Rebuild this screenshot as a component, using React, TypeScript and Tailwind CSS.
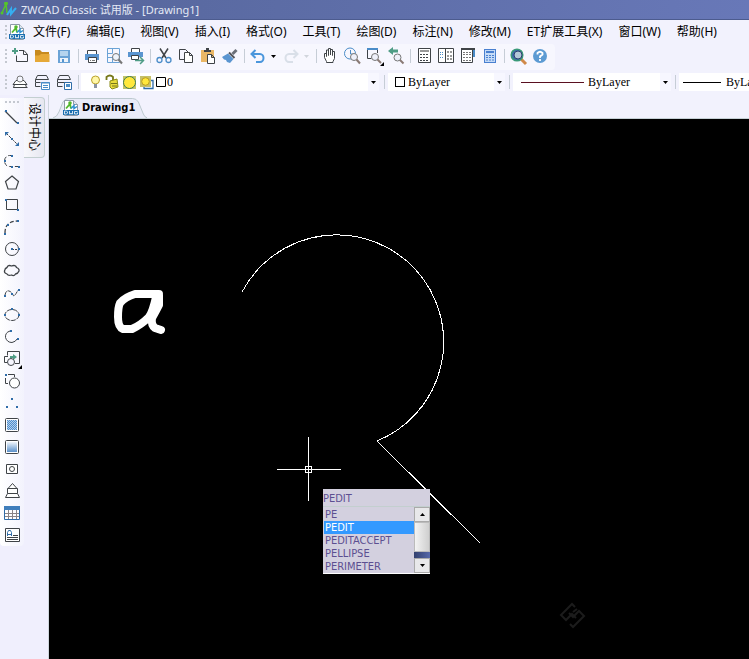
import type { ReactNode } from "react";

const INK = "#3f4347";
const BLUE = "#4a8cc8";

/* Every glyph is drawn on the 22px cell of its button */
const icons: Record<string, ReactNode> = {
  // Standard toolbar
  new: (
    <>
      <path d="M3 6h6M6 3v6" stroke="#4f9d86" strokeWidth="2" />
      <path d="M10 5.500h5l3.500 4v7h-11v-6M14.500 5.500v4h4" stroke={INK} fill="none" />
    </>
  ),
  open: (
    <>
      <path d="M4 5h5l2 2h7v10H4z" fill="#c78a1e" />
      <path d="M4 17V10.500h4l2-1.500h8.500V17z" fill="#e6a937" />
    </>
  ),
  save: (
    <>
      <path d="M5 5h12v13H5z" fill="#6ba3d6" />
      <path d="M7 6h8v5H7z" fill="#b5d4ee" />
      <path d="M7 13h8v4H7z" fill="#eef4fb" />
      <path d="M9 14h2v3H9z" fill="#5795cf" />
    </>
  ),
  print: (
    <>
      <path d="M6.500 9V5.500h9V9" stroke={INK} fill="#fff" />
      <path d="M4 9h14v6H4z" fill="#5a95d0" />
      <path d="M7.500 12.500h8v5h-8z" stroke={INK} fill="#fff" />
      <path d="M9 15.500h1M11 15.500h3" stroke="#777" />
    </>
  ),
  preview: (
    <>
      <path d="M4.500 3.500h12v14h-12zM4.500 8.500h5v-5M9.500 12v5.500M4.500 12.500h5" stroke="#6ba3d6" fill="none" />
      <circle cx="13" cy="12" r="3.500" fill="#eef4fb" stroke="#777" />
      <path d="M15.500 14.500l3.500 4" stroke="#777" strokeWidth="2" />
    </>
  ),
  publish: (
    <>
      <path d="M6.500 7V3.500h8V7" stroke={INK} fill="#fff" />
      <path d="M3 7h15v5H3z" fill="#5a95d0" />
      <path d="M6.500 10.500h7v4h-7z" stroke={INK} fill="#fff" />
      <path d="M10 15.500h8M15 12l3.500 3.500L15 19" stroke="#4f9d86" strokeWidth="1.500" fill="none" />
    </>
  ),
  cut: (
    <>
      <path d="M7 3.500l6 9.500M15 3.500L9 13" stroke={INK} strokeWidth="1.500" />
      <circle cx="6.500" cy="15" r="2.500" stroke={BLUE} fill="none" strokeWidth="1.300" />
      <circle cx="15.500" cy="15" r="2.500" stroke={BLUE} fill="none" strokeWidth="1.300" />
    </>
  ),
  copy: (
    <>
      <path d="M4.500 4.500h6l3 3v7h-9z" stroke={INK} fill="#f6f6ff" />
      <path d="M9.500 7.500h5l3 3v7h-8zM14.500 7.500v3h3" stroke={INK} fill="#fff" />
    </>
  ),
  paste: (
    <>
      <path d="M4 5h13v12H4z" fill="#eab765" />
      <path d="M7 6h7M9 4h3" stroke={INK} strokeWidth="2" />
      <path d="M10.500 9.500h4l3 3v6h-7zM14.500 9.500v3h3" stroke={INK} fill="#fff" />
    </>
  ),
  brush: (
    <>
      <path d="M17.500 5l-4 4" stroke="#6a6f78" strokeWidth="3" />
      <path d="M10 7.500l5.500 5.500" stroke="#54565c" strokeWidth="2" />
      <path d="M9 8.500l5.500 5.500-3.500 4-3-1-1-2-2-.5-2-2.500z" fill="#5a95d0" />
    </>
  ),
  undo: (
    <path d="M8.500 5L4.500 9l4 4M5 9h8a3.500 4 0 0 1 0 8H9" stroke="#4a96dc" strokeWidth="2" fill="none" />
  ),
  redo: (
    <path d="M13.500 5l4 4-4 4M17 9H9a3.500 4 0 0 0 0 8h4" stroke="#d9dfe8" strokeWidth="2" fill="none" />
  ),
  pan: (
    <path
      d="M7.500 17.500v-1L5.500 12.500V8.500h2v3V5h2v5.500V3.500h2V10V4.500h2v6V6.500h2v7l-1.500 3v1z"
      stroke={INK}
      fill="#fff"
    />
  ),
  zoomRealtime: (
    <>
      <circle cx="9" cy="8.500" r="5.500" stroke={BLUE} fill="none" />
      <path d="M9.500 5v4h3" stroke={BLUE} fill="none" />
      <circle cx="13" cy="12" r="3.500" fill="#eef0fa" stroke="#777" />
      <path d="M15.500 14.500l3.500 4" stroke="#8a7a74" strokeWidth="2" />
    </>
  ),
  zoomWindow: (
    <>
      <path d="M4 4h11" stroke={BLUE} strokeWidth="2" />
      <path d="M4.500 5v8.500h4M14.500 5v3" stroke={INK} fill="none" />
      <circle cx="12" cy="12" r="3.500" fill="#eef0fa" stroke="#777" />
      <path d="M14.500 14.500l3.500 3.500" stroke="#8a7a74" strokeWidth="2" />
      <path d="M21 17v4h-4z" fill="#000" />
    </>
  ),
  zoomPrevious: (
    <>
      <path d="M5 6h8" stroke="#4f9d86" strokeWidth="3" />
      <path d="M8 2v8L3 6z" fill="#4f9d86" />
      <circle cx="12.500" cy="12.500" r="3.500" fill="#eef0fa" stroke="#777" />
      <path d="M15 15l3.500 3.500" stroke="#8a7a74" strokeWidth="2" />
    </>
  ),
  properties: (
    <>
      <path d="M5.500 3.500h12v14h-12z" stroke={INK} fill="#fff" />
      <path d="M7 6h9" stroke="#999" strokeWidth="2" />
      <path d="M7 9.500h9M7 12.500h9M7 15.500h9" stroke={INK} strokeDasharray="2 1" />
    </>
  ),
  designCenter: (
    <>
      <path d="M3.500 3.500h15v14h-15zM10.500 3.500v14" stroke={INK} fill="#fff" />
      <path d="M12 7h5M12 11h5M12 14h5" stroke="#999" strokeDasharray="2 1" strokeWidth="2" />
      <path d="M5 7.500h4M5 9.500h4M5 12.500h4" stroke={BLUE} strokeDasharray="1 1" />
    </>
  ),
  toolPalette: (
    <>
      <path d="M4.500 3.500h11v14h-11z" stroke={INK} fill="#fff" />
      <path d="M4 4h14" stroke={INK} strokeWidth="2" />
      <path d="M17 5v7" stroke={BLUE} strokeWidth="2" />
      <path d="M6 7.500h8M6 9.500h8M6 12.500h8M6 15.500h8" stroke="#777" strokeDasharray="2 1" />
    </>
  ),
  calculator: (
    <>
      <rect x="5.500" y="4.500" width="11" height="13" fill="#c5dbf7" stroke="#4a80d0" />
      <path d="M7 7h8" stroke="#4a80d0" strokeWidth="2" />
      <path d="M7 10.500h8M7 12.500h8M7 15h8" stroke="#4a80d0" strokeDasharray="2 1" />
    </>
  ),
  find: (
    <>
      <path d="M13 13l6 6" stroke="#d08a4a" strokeWidth="3" />
      <circle cx="10" cy="10" r="5.800" fill="#3b6ba8" stroke="#3a9a78" strokeWidth="1.500" />
      <circle cx="11" cy="10" r="4" fill="#b3c7d8" stroke="#2d3e70" />
    </>
  ),
  help: (
    <>
      <circle cx="11" cy="11" r="7" fill="#5c9bd3" />
      <path d="M8.500 9.500V8q2.500-2.500 5 0v1.500L11 11.500V13M11 14v2" stroke="#fff" strokeWidth="1.800" fill="none" />
    </>
  ),

  // Layer toolbar
  layers: (
    <>
      <path d="M7 9.500h8l3 4H4zM5.500 13.500l-1 3h13l-1-3M4.500 16.500h14" stroke={INK} fill="#fff" />
      <circle cx="11" cy="8" r="3" stroke="#777" fill="#f4f6ff" />
    </>
  ),
  layerStates: (
    <>
      <path d="M6.500 4.500h9l2 4h-13zM4.500 8.500v3h5M4.500 12v3.500h5" stroke={INK} fill="none" />
      <path d="M10.500 11.500h8v7h-8z" stroke={BLUE} fill="#fff" />
      <path d="M10 12h9M12 14.500h5M12 16.500h5" stroke={BLUE} />
    </>
  ),
  layerPrevious: (
    <>
      <path d="M6.500 4.500h9l2 4h-13zM4.500 8.500v3h13M4.500 12v3.500h5" stroke={INK} fill="none" />
      <path d="M11.500 11.500h7v7h-7z" stroke="#2f6ca8" fill="#fff" />
      <path d="M13 13h4v3h-4z" fill={BLUE} />
    </>
  ),

  // Draw toolbar
  line: (
    <>
      <path d="M5 5l12 12" stroke={INK} strokeWidth="1.200" />
      <path d="M5 4h2v2H5zM17 16h2v2h-2z" fill="#2f6ca8" />
    </>
  ),
  ray: (
    <>
      <path d="M6 5l12 12" stroke={INK} strokeDasharray="3 1" />
      <path d="M5 8V4h4zM19 14v4h-4zM11 10h2v2h-2z" fill="#2f6ca8" />
    </>
  ),
  polyline: (
    <>
      <path d="M12 5.500H9.500a5 5.500 0 0 0 0 11h9" stroke={INK} fill="none" strokeDasharray="4 2" />
      <path d="M11 5h2v2h-2zM4 10h2v2H4zM11 16h2v2h-2zM18 16h2v2h-2z" fill="#2f6ca8" />
    </>
  ),
  polygon: <path d="M12 4l6.500 5.500L16 17H8L5.500 9.500z" stroke={INK} strokeWidth="1.200" fill="none" />,
  rectangle: (
    <>
      <path d="M6.500 5.500h11v10h-11z" stroke={INK} fill="none" />
      <path d="M5 5h2v2H5zM17 15h2v2h-2z" fill="#2f6ca8" />
    </>
  ),
  arc: (
    <>
      <path d="M5 17q0-12 13-12" stroke={INK} strokeWidth="1.300" strokeDasharray="4 2" fill="none" />
      <path d="M4 17h2v2H4zM7 8h2v2H7zM17 4h2v2h-2z" fill="#2f6ca8" />
    </>
  ),
  circle: (
    <>
      <circle cx="12" cy="11" r="6.500" stroke={INK} fill="none" />
      <path d="M12 11.500h6" stroke={INK} strokeDasharray="2 1" />
      <path d="M11 10h2v2h-2zM18 10h2v2h-2z" fill="#2f6ca8" />
    </>
  ),
  cloud: (
    <path
      d="M7 7.500q1-3 4.500-1.500 4-1.500 5 1.500 3 1 2.500 3.500-1 2.500-3.500 3-1.500 2.500-4 1-3.500 1-4.500-1-3-1-2.500-3 .5-3 2.500-3.500z"
      stroke={INK}
      strokeWidth="1.300"
      fill="none"
    />
  ),
  spline: (
    <>
      <path d="M5 13q1-5 4-4t4 4 5-5" stroke={INK} fill="none" strokeDasharray="4 1" />
      <path d="M4 13h2v2H4zM11 11h2v2h-2zM18 7h2v2h-2z" fill="#2f6ca8" />
    </>
  ),
  ellipse: (
    <>
      <ellipse cx="12" cy="11" rx="7" ry="5.500" stroke={INK} fill="none" strokeDasharray="5 1" />
      <path d="M11 4h2v2h-2zM4 10h2v2H4zM18 10h2v2h-2z" fill="#2f6ca8" />
    </>
  ),
  ellipseArc: (
    <>
      <path d="M10 5q-5 1.500-4.500 6.500 1.500 5 6.500 5 3.500-.5 5.500-4" stroke={INK} fill="none" />
      <path d="M10 4h2v2h-2zM17 12h2v2h-2z" fill="#2f6ca8" />
    </>
  ),
  insertBlock: (
    <>
      <path d="M7.500 7.500v-4h12v12H15M8 8.500H4.500v6H7" stroke={INK} fill="none" />
      <path d="M10 8h3V6l4 3-4 3v-2h-3z" fill="#4f9d86" />
      <circle cx="11" cy="14" r="3.500" stroke={INK} fill="#f6f6ff" />
      <path d="M22 17v4h-4z" fill="#000" />
    </>
  ),
  makeBlock: (
    <>
      <path d="M8 4.500h6.500V7M5.500 8v5.500H8" stroke={INK} fill="none" />
      <path d="M5 4h2v2H5z" fill="#2f6ca8" />
      <circle cx="14.500" cy="13" r="5" stroke={INK} fill="#fff" />
    </>
  ),
  point: <path d="M11 6h2v2h-2zM6 14h2v2H6zM16 14h2v2h-2z" fill="#2f6ca8" />,
  hatch: (
    <>
      <rect x="5.500" y="4.500" width="13" height="13" rx="1" stroke={INK} fill="#fff" />
      <path d="M7 6h10v10H7z" fill="#b4cfec" />
      <path
        d="M7 6.500h10M8 7.500h9M7 8.500h10M8 9.500h9M7 10.500h10M8 11.500h9M7 12.500h10M8 13.500h9M7 14.500h10M8 15.500h9"
        stroke="#4f8fce"
        strokeDasharray="1 1"
      />
    </>
  ),
  gradient: (
    <>
      <defs>
        <linearGradient id="fade" x1="0" y1="0" x2="0" y2="1">
          <stop stopColor="#eef4fb" />
          <stop offset="1" stopColor="#5a90ca" />
        </linearGradient>
      </defs>
      <rect x="5.500" y="4.500" width="13" height="13" rx="1" stroke={INK} fill="#fff" />
      <path d="M7 6h10v10H7z" fill="url(#fade)" />
    </>
  ),
  region: (
    <>
      <path d="M6.500 6.500h11v9h-11z" stroke={INK} fill="#fff" />
      <circle cx="12" cy="11" r="2.500" stroke={INK} fill="none" />
    </>
  ),
  wipeout: (
    <path d="M12.500 3.500l4.500 5H8zM7.500 8.500h10v5h-10zM7.500 13.500l-2 4h14l-2-4" stroke={INK} fill="#fff" />
  ),
  table: (
    <>
      <path d="M4.500 4.500h15v13h-15z" stroke="#2f6ca8" fill="#fff" />
      <path d="M5 11.500h14M5 14.500h14M8.500 8v9M12.500 8v9M16.500 8v9" stroke="#8b8587" />
      <path d="M4 4h16v4H4z" fill="#3f7dbb" />
    </>
  ),
  text: (
    <>
      <path d="M5.500 4.500h14v13h-14z" stroke={INK} fill="#fff" />
      <path d="M7.500 12V8.500l1-2h2l1 2V12M8 10.500h3" stroke="#2f6ca8" fill="none" />
      <path d="M13 11.500h5M7 13.500h11M7 15.500h11" stroke={INK} />
    </>
  ),
};

function Icon({ name }: { name: string }) {
  return (
    <svg viewBox="0 0 22 22" className="size-[22px]" aria-hidden="true">
      {icons[name]}
    </svg>
  );
}

function ToolButton({ name }: { name: string }) {
  return (
    <button type="button" aria-label={name} className="block size-[22px] shrink-0 hover:bg-blue-100">
      <Icon name={name} />
    </button>
  );
}

function Separator() {
  return (
    <div className="flex h-[22px] w-1.5 shrink-0 items-center justify-center">
      <div className="h-3.5 w-px bg-[#c6cdd6]" />
    </div>
  );
}

function Grip() {
  return (
    <div className="flex h-[22px] w-[9px] shrink-0 flex-col items-end justify-center gap-0.5 pr-0.5">
      {[0, 1, 2, 3].map((dot) => (
        <div key={dot} className="size-0.5 bg-[#c4c8d0]" />
      ))}
    </div>
  );
}

function Caret({ faded }: { faded?: boolean }) {
  return (
    <svg viewBox="0 0 5 3" className={faded ? "h-[3px] w-[5px] fill-gray-300" : "h-[3px] w-[5px] fill-black"}>
      <path d="M0 0h5L2.500 3z" />
    </svg>
  );
}

/* DWG document badge used by the menu bar and the file tab */
function DwgIcon() {
  return (
    <svg viewBox="0 0 16 16" className="size-4 shrink-0" aria-hidden="true">
      <path d="M1.500.5h9l4 4v11h-13z" fill="#fff" stroke="#8d9aa8" />
      <path d="M10.500.5v4h4" fill="#dfe6ee" stroke="#8d9aa8" />
      <path d="M3 8.500L7 4l1 4.500" stroke="#52b82c" strokeWidth="1.800" fill="none" />
      <circle cx="7" cy="3" r="1.800" fill="#52b82c" />
      <path d="M8 8.500l3-3v3l3-2" stroke="#2b8fd0" strokeWidth="1.500" fill="none" />
      <path d="M0 10h16v5H0z" fill="#1c6fb0" />
      <path d="M1.500 11v3h2l1-1v-1l-1-1zM6.500 11v3h1l.5-1 .5 1h1v-3M14.500 11.500h-3v2.500h3v-1.500" stroke="#fff" fill="none" strokeWidth=".8" />
    </svg>
  );
}

interface ComboProps {
  label: string;
  value: string;
  width: string;
  padding: string;
  children: ReactNode;
}

function Combo({ label, value, width, padding, children }: ComboProps) {
  return (
    <div className={`relative mt-0.5 h-[18px] shrink-0 bg-white ${width}`}>
      <select
        aria-label={label}
        className={`block h-full w-full appearance-none bg-transparent font-["Liberation_Serif",serif] text-xs leading-[18px] text-black outline-none ${padding}`}
      >
        <option>{value}</option>
      </select>
      <div className="pointer-events-none absolute inset-y-0 left-0 flex items-center">{children}</div>
      <div className="pointer-events-none absolute inset-y-0 right-0 flex w-[11px] items-center justify-center bg-[#f7f7ff]">
        <Caret />
      </div>
    </div>
  );
}

const menus = [
  "文件(F)",
  "编辑(E)",
  "视图(V)",
  "插入(I)",
  "格式(O)",
  "工具(T)",
  "绘图(D)",
  "标注(N)",
  "修改(M)",
  "ET扩展工具(X)",
  "窗口(W)",
  "帮助(H)",
];

const drawTools = [
  "line", "ray", "polyline", "polygon", "rectangle", "arc", "circle", "cloud", "spline", "ellipse",
  "ellipseArc", "insertBlock", "makeBlock", "point", "hatch", "gradient", "region", "wipeout", "table", "text",
];

const commands = ["PE", "PEDIT", "PEDITACCEPT", "PELLIPSE", "PERIMETER"];

function StandardToolbar() {
  return (
    <div className="flex h-[26px] w-fit items-start rounded-r bg-[#f7f7fe] pt-px pr-1">
      <Grip />
      <ToolButton name="new" />
      <ToolButton name="open" />
      <ToolButton name="save" />
      <Separator />
      <ToolButton name="print" />
      <ToolButton name="preview" />
      <ToolButton name="publish" />
      <Separator />
      <ToolButton name="cut" />
      <ToolButton name="copy" />
      <ToolButton name="paste" />
      <ToolButton name="brush" />
      <Separator />
      <ToolButton name="undo" />
      <button type="button" aria-label="undo list" className="flex h-[22px] w-[11px] items-center pl-0.5">
        <Caret />
      </button>
      <ToolButton name="redo" />
      <button type="button" aria-label="redo list" className="flex h-[22px] w-[11px] items-center pl-0.5">
        <Caret faded />
      </button>
      <Separator />
      <ToolButton name="pan" />
      <ToolButton name="zoomRealtime" />
      <ToolButton name="zoomWindow" />
      <ToolButton name="zoomPrevious" />
      <Separator />
      <ToolButton name="properties" />
      <ToolButton name="designCenter" />
      <ToolButton name="toolPalette" />
      <ToolButton name="calculator" />
      <Separator />
      <ToolButton name="find" />
      <ToolButton name="help" />
    </div>
  );
}

function LayerToolbar() {
  return (
    <div className="flex h-[25px] items-start overflow-hidden pt-px">
      <Grip />
      <ToolButton name="layers" />
      <ToolButton name="layerStates" />
      <ToolButton name="layerPrevious" />
      <Separator />
      <Combo label="Layer" value="0" width="w-[298px]" padding="pl-[86px]">
        <svg viewBox="0 0 86 18" className="h-[18px] w-[86px]" aria-hidden="true">
          {/* bulb */}
          <circle cx="14.500" cy="7" r="4" fill="#fff7a8" stroke="#b9a12c" />
          <path d="M13 11h3v4h-3z" fill="#8b94a4" />
          {/* lock */}
          <path d="M25.500 7V4q3.500-3 6.500 0v4" stroke="#77781a" strokeWidth="1.800" fill="none" />
          <path d="M29 8l7-2 1 8-6 2-2-2z" fill="#e9dc3a" stroke="#8b8b16" />
          <path d="M30 10.500h6M31 13h5" stroke="#77781a" />
          {/* sun */}
          <path d="M42 3h13v13H42z" fill="#c2c46a" />
          <circle cx="48.500" cy="9.500" r="6" fill="#ffe83c" stroke="#3f7a54" />
          {/* viewport freeze */}
          <path d="M65 7.500h7v8h-9v-3" stroke="#2f6ca8" strokeWidth="1.300" fill="#fff" />
          <path d="M59 3h11v11H59z" fill="#c5c06a" />
          <circle cx="64.500" cy="8.500" r="3.800" fill="#ffe83c" stroke="#bd9d1c" />
          <path d="M75.500 4.500h9v9h-9z" stroke="#000" fill="#fff" />
        </svg>
      </Combo>
      <div className="mr-px ml-0.5 flex"><Separator /></div>
      <Combo label="Color" value="ByLayer" width="w-[117px]" padding="pl-5">
        <div className="ml-[7px] size-2.5 border border-black" />
      </Combo>
      <div className="mx-px flex"><Separator /></div>
      <Combo label="Linetype" value="ByLayer" width="w-[158px]" padding="pl-[75px]">
        <div className="ml-2 h-px w-[63px] bg-[#5a1020]" />
      </Combo>
      <div className="mx-px flex"><Separator /></div>
      <Combo label="Lineweight" value="ByLayer" width="w-[158px]" padding="pl-[47px]">
        <div className="ml-1 h-px w-[38px] bg-black" />
      </Combo>
    </div>
  );
}

function CommandPopup() {
  return (
    <div className='absolute top-[370px] left-[274px] w-[107px] bg-[#d3d0df] font-["DejaVu_Sans_Condensed","DejaVu_Sans",sans-serif] text-[11px] text-[#5c4f91]'>
      <input
        aria-label="Command"
        defaultValue="PEDIT"
        className="block h-[17px] w-full bg-transparent pt-0.5 outline-none"
      />
      <div className="flex border-y border-t-[#c3cfcf] border-b-white">
        <ul role="listbox" aria-label="Commands" className="min-w-0 flex-1 pt-px pl-px">
          {commands.map((command) => (
            <li
              key={command}
              role="option"
              aria-selected={command === "PEDIT"}
              className="h-[13px] pl-px leading-[13px] aria-selected:bg-[#3399ff] aria-selected:text-white"
            >
              {command}
            </li>
          ))}
        </ul>
        <div className="flex w-4 flex-col bg-linear-to-r from-[#33416f] to-[#5668aa]">
          <button type="button" aria-label="Scroll up" className="flex h-[15px] items-center justify-center border border-[#aaa] bg-[#e8e8ea]">
            <span className="rotate-180"><Caret /></span>
          </button>
          <div className="mb-1.5 flex-1 border border-[#bbb] bg-linear-to-r from-[#f3f3f3] to-[#cfcfcf]" />
          <button type="button" aria-label="Scroll down" className="flex h-[15px] items-center justify-center border border-[#aaa] bg-[#e8e8ea]">
            <Caret />
          </button>
        </div>
      </div>
    </div>
  );
}

function DrawingArea() {
  return (
    <div className="relative flex-1 overflow-hidden bg-black">
      <svg className="absolute inset-0 h-full w-full" fill="none" stroke="#fff" aria-hidden="true">
        {/* arc and line */}
        <path d="M193 173A107 107 0 1 1 328 322L431 424" shapeRendering="crispEdges" />

        {/* freehand letter */}
        <path
          d="M110 175H86Q76 178 71 184Q69 188 69 198Q69 208 74 210H83Q92 206 100 198Q104 192 107 178M110 176L110 186Q107 192 103 199Q102 206 106 209L112 211"
          strokeWidth="8"
          strokeLinecap="round"
          strokeLinejoin="round"
        />

        {/* crosshair */}
        <path
          d="M228 350.500h64M259.500 318v64M256.500 347.500h6v6h-6z"
          shapeRendering="crispEdges"
        />

        {/* watermark */}
        <path
          d="M521 505l3 3 11-11-5-5-6 6-4-4M526 488l-3-3-11 11 5 5 6-6 4 4M524 493l4-3"
          stroke="#1c1c1c"
          strokeWidth="2"
        />
      </svg>
      <CommandPopup />
    </div>
  );
}

export default function App() {
  return (
    <div className='flex min-h-screen flex-col overflow-hidden bg-[#f2f2fd] font-["Noto_Sans","Noto_Sans_CJK_SC",sans-serif] text-xs text-black'>
      {/* Title bar */}
      <header className="flex h-5 items-center gap-1 border-b border-[#4c5b8e] bg-linear-to-r from-[#55659a] to-[#6878b8] whitespace-nowrap text-[#e4e9f5]">
        <svg viewBox="0 0 17 16" className="h-4 w-[17px]" aria-hidden="true">
          <path d="M2 11L6 2l1 9" stroke="#55c32c" strokeWidth="1.500" fill="none" />
          <circle cx="6" cy="1.500" r="2" fill="#55c32c" />
          <circle cx="2" cy="11" r="1.500" fill="#55c32c" />
          <path d="M7 13l4-6v5l5-6" stroke="#35aef0" strokeWidth="2" fill="none" />
        </svg>
        <h1 className="text-[11px] leading-4">ZWCAD Classic 试用版 - [Drawing1]</h1>
      </header>

      {/* Menu bar */}
      <nav className="flex h-6 items-center whitespace-nowrap">
        <Grip />
        <DwgIcon />
        <div className="flex gap-4 pl-2">
          {menus.map((menu) => (
            <button key={menu} type="button" className="hover:text-blue-700">
              {menu}
            </button>
          ))}
        </div>
      </nav>

      <StandardToolbar />
      <LayerToolbar />

      <main className="flex flex-1">
        {/* Draw toolbar */}
        <aside className="w-6 shrink-0 bg-[#f0effd] pt-[3px]">
          <div className="rounded-b bg-linear-to-r from-white to-[#f3f3fd]">
            <div className="flex h-2 items-center justify-center gap-0.5">
              {[0, 1, 2, 3].map((dot) => (
                <div key={dot} className="size-0.5 bg-[#c4c8d0]" />
              ))}
            </div>
            {drawTools.map((tool) => (
              <ToolButton key={tool} name={tool} />
            ))}
          </div>
        </aside>

        {/* Docked panel tab */}
        <div className="w-[25px] shrink-0 border-r border-[#cdd5dc] bg-[#f0effd] pt-0.5">
          <button
            type="button"
            className="flex h-[61px] w-[21px] items-center justify-center rounded-r border border-l-0 border-[#c3cfd0] bg-linear-to-r from-[#f8f8fc] to-[#e6e7f0] leading-none whitespace-nowrap [text-orientation:sideways] [writing-mode:vertical-rl]"
          >
            设计中心
          </button>
        </div>

        <section className="flex min-w-0 flex-1 flex-col">
          {/* File tabs */}
          <div className="flex h-6 items-end border-b border-[#c5d0d5] pl-1">
            <button type="button" className="relative flex h-5 items-center gap-[3px] pr-3 pl-[10px]">
              <svg viewBox="0 0 95 20" preserveAspectRatio="none" className="absolute inset-0 h-full w-full" aria-hidden="true">
                <path d="M0 20Q4 19 6 14L10 4Q12 .5 16 .5H80Q84 .5 86 4L91 16Q92 19 95 20" fill="#e9ebf8" stroke="#bcc9ce" />
              </svg>
              <span className="relative"><DwgIcon /></span>
              <span className='relative font-["DejaVu_Sans_Condensed","DejaVu_Sans",sans-serif] text-[11px] font-bold'>
                Drawing1
              </span>
            </button>
          </div>
          <DrawingArea />
        </section>
      </main>
    </div>
  );
}
